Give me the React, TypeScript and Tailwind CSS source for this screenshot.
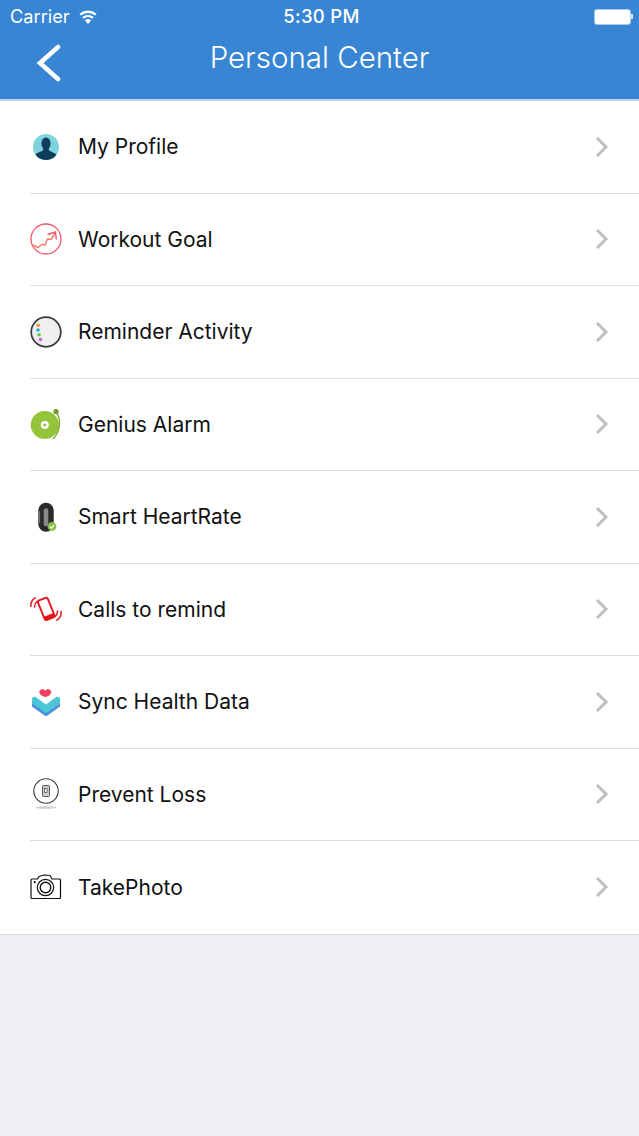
import React from "react";

const Profile = () => (
  <svg width="28" height="28" viewBox="0 0 28 28">
    <defs><clipPath id="pc"><circle cx="14" cy="14" r="13" /></clipPath></defs>
    <circle cx="14" cy="14" r="13" fill="#7fd3dc" />
    <g clipPath="url(#pc)" fill="#0f3d5c">
      <ellipse cx="14" cy="10.500" rx="4.600" ry="6" />
      <path d="M11.500 15h5l.6 2.500 6.400 3.200c1.400.8 2 2.300 2 3.300v4H2v-4c0-1 .6-2.500 2-3.300l6.900-3.200z" />
    </g>
  </svg>
);
const Goal = () => (
  <svg width="32" height="32" viewBox="0 0 32 32" fill="none">
    <circle cx="16" cy="16" r="15" stroke="#f5526b" strokeWidth="1.300" />
    <path d="M3 22l5 2.500 4.500-3.500 2.500 1.500 2.500-6.500 3.500.5 4.500-7" stroke="#f47a62" strokeWidth="1.400" strokeLinejoin="round" />
    <path d="M17.500 11.500l8-2.500.8 7.500" stroke="#f5526b" strokeWidth="1.400" strokeLinejoin="round" />
  </svg>
);
const Reminder = () => (
  <svg width="32" height="32" viewBox="0 0 32 32">
    <circle cx="16" cy="16" r="14.800" fill="#efefef" stroke="#3a3a3c" strokeWidth="1.700" />
    <circle cx="8.200" cy="9.200" r="1.800" fill="#f39a2b" />
    <circle cx="8" cy="14" r="1.800" fill="#2f9ff0" />
    <circle cx="9" cy="18.800" r="1.800" fill="#5bd13a" />
    <circle cx="10.500" cy="23.600" r="1.800" fill="#cf62e8" />
  </svg>
);
const Alarm = () => (
  <svg width="32" height="32" viewBox="0 0 32 32" fill="none">
    <circle cx="14.800" cy="17" r="14" fill="#94c43a" />
    <circle cx="14.800" cy="17" r="4" fill="#fff" />
    <circle cx="14.800" cy="17" r="1.400" fill="#94c43a" />
    <path d="M26 4c5 6 5 19-3 27" stroke="#7ba92f" strokeWidth="1.400" />
    <circle cx="26" cy="3.500" r="2.600" fill="#6f9a2b" />
  </svg>
);
const Band = () => (
  <svg width="24" height="30" viewBox="0 0 24 30" fill="none">
    <rect x="7" y="3.500" width="10" height="23.500" rx="5" fill="#8a8a8c" stroke="#2b2b2d" strokeWidth="5.400" />
    <path d="M5.500 9v12" stroke="#77777a" strokeWidth="1.200" />
    <circle cx="18" cy="24.500" r="4.400" fill="#86c441" />
    <path d="M15.900 24.500l1.600 1.600 2.700-3" stroke="#fff" strokeWidth="1.200" />
  </svg>
);
const Calls = () => (
  <svg width="32" height="30" viewBox="0 0 32 30" fill="none">
    <g transform="rotate(-22 16 15)">
      <rect x="11" y="4.500" width="10.500" height="21" rx="1.800" stroke="#e8141c" strokeWidth="1.900" />
      <rect x="11" y="21.500" width="10.500" height="4" rx="1" fill="#e8141c" />
    </g>
    <path d="M.9 12.500C.6 9 2.300 5.500 5.200 3.800M4.500 13c-.1-2.300.8-4.300 2.500-5.500" stroke="#e8141c" strokeWidth="1.500" strokeLinecap="round" />
    <path d="M31.100 17.500c.3 3.500-1.400 7-4.300 8.700M27.500 17c.1 2.300-.8 4.300-2.500 5.500" stroke="#e8141c" strokeWidth="1.500" strokeLinecap="round" />
  </svg>
);
const Health = () => (
  <svg width="30" height="30" viewBox="0 0 30 30">
    <path d="M1 16v3.500l14 10 14-10V16l-14 9.500z" fill="#4a8fdc" />
    <path d="M1 11l3-1.500 11 8 11-8 3 1.500v5.500l-14 9.500-14-9.500z" fill="#4cc5d6" />
    <path d="M14.500 10c-5-1-6.500-3.500-6-5.700.6-2.300 4-2.800 5.800-.6 1.800-2.200 5.200-1.700 5.800.6.500 2.200-1 4.700-5.600 5.700z" fill="#f0405f" />
  </svg>
);
const Loss = () => (
  <svg width="30" height="32" viewBox="0 0 30 32" fill="none">
    <circle cx="15" cy="13" r="12.200" fill="#fff" stroke="#3a3a3c" strokeWidth="1.100" />
    <rect x="11.500" y="7.500" width="7" height="11" rx="1" fill="#cfcfcf" stroke="#444" strokeWidth="0.900" />
    <rect x="13.500" y="10.500" width="2.600" height="4" fill="#fff" stroke="#444" strokeWidth="0.700" />
    <ellipse cx="15" cy="29.500" rx="10.500" ry="1.400" fill="#d2d2d2" />
  </svg>
);
const Camera = () => (
  <svg width="32" height="26" viewBox="0 0 32 26" fill="none" stroke="#111">
    <path d="M2 5h5.500l1.500-2.500 5-1.500 6 .5 2 3.500h7.500c.6 0 1 .4 1 1v17.500c0 .6-.4 1-1 1H2c-.6 0-1-.4-1-1V6c0-.6.4-1 1-1z" strokeWidth="1.200" strokeLinejoin="round" />
    <circle cx="15.500" cy="13.500" r="8.200" strokeWidth="1.200" />
    <circle cx="15.500" cy="13.500" r="5.300" strokeWidth="1.400" />
    <circle cx="4.800" cy="8.200" r="1.100" fill="#111" stroke="none" />
  </svg>
);

const rows: [string, React.ReactNode][] = [
  ["My Profile", <Profile />],
  ["Workout Goal", <Goal />],
  ["Reminder Activity", <Reminder />],
  ["Genius Alarm", <Alarm />],
  ["Smart HeartRate", <Band />],
  ["Calls to remind", <Calls />],
  ["Sync Health Data", <Health />],
  ["Prevent Loss", <Loss />],
  ["TakePhoto", <Camera />],
];

export default function App() {
  return (
    <div className="h-[1136px] bg-[#efeff4] font-['Inter',sans-serif] overflow-hidden">
      <header className="h-[99px] bg-[#3785d3] text-white flex flex-col border-b-2 border-[#b9d3f0] box-content">
        <div className="h-[32px] pl-[10px] pr-[6px] pt-[1px] grid grid-cols-3 items-center text-[18.200px]">
          <div className="flex items-center gap-[8px]">
            <span>Carrier</span>
            <svg width="20" height="15" viewBox="0 0 20 15" fill="white">
              <path d="M10 15l-3-3.600a4.600 4.600 0 016 0zM5.700 9.800L4.200 8a9 9 0 0111.600 0l-1.500 1.800a6.700 6.700 0 00-8.600 0zM2.900 6.500L1.400 4.700a13.400 13.400 0 0117.200 0l-1.500 1.800a11 11 0 00-14.200 0z" />
            </svg>
          </div>
          <div className="text-center font-medium text-[18.500px] tracking-[0.3px]">5:30 PM</div>
          <div className="flex justify-end items-center">
            <div className="w-[37px] h-[16px] rounded-[3px] bg-white border border-[#a9c9ec]" />
            <div className="w-[2px] h-[5px] bg-white/80" />
          </div>
        </div>
        <div className="relative flex-1 flex items-start justify-center">
          <span className="text-[29.500px] font-light leading-[50px]">Personal Center</span>
          <svg className="absolute left-[34px] top-[12px]" width="28" height="38" viewBox="0 0 28 38" fill="none">
            <path d="M24 3L6 19l18 16" stroke="white" strokeWidth="4.500" strokeLinecap="round" strokeLinejoin="miter" />
          </svg>
        </div>
      </header>
      <ul className="bg-white border-b border-[#d9d9dc]">
        {rows.map(([label, icon], i) => (
          <li key={label} className="h-[92.500px] pl-[30px] flex">
            <div className={`flex-1 flex items-center ${i < rows.length - 1 ? "border-b border-[#dcdcdf]" : ""}`}>
              <div className="w-[32px] flex justify-center items-center">{icon}</div>
              <span className="ml-[16px] flex-1 text-[21px] text-[#111]">{label}</span>
              <svg className="mr-[29px]" width="16" height="22" viewBox="0 0 16 22" fill="none">
                <path d="M3 2l9 9-9 9" stroke="#bfbfc2" strokeWidth="3" />
              </svg>
            </div>
          </li>
        ))}
      </ul>
    </div>
  );
}
